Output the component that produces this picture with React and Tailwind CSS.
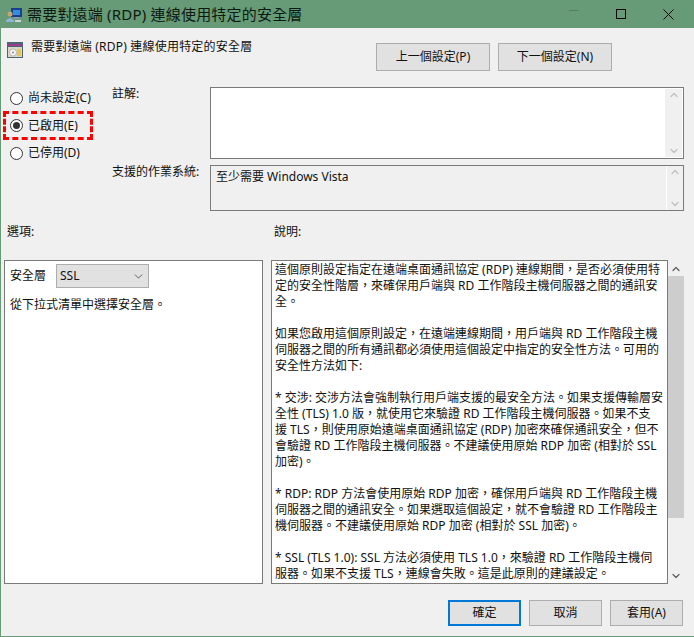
import { ChevronDown, ChevronUp } from "lucide-react";

const helpLines = [
  "這個原則設定指定在遠端桌面通訊協定 (RDP) 連線期間，是否必須使用特",
  "定的安全性階層，來確保用戶端與 RD 工作階段主機伺服器之間的通訊安",
  "全。",
  "",
  "如果您啟用這個原則設定，在遠端連線期間，用戶端與 RD 工作階段主機",
  "伺服器之間的所有通訊都必須使用這個設定中指定的安全性方法。可用的",
  "安全性方法如下:",
  "",
  "* 交涉: 交涉方法會強制執行用戶端支援的最安全方法。如果支援傳輸層安",
  "全性 (TLS) 1.0 版，就使用它來驗證 RD 工作階段主機伺服器。如果不支",
  "援 TLS，則使用原始遠端桌面通訊協定 (RDP) 加密來確保通訊安全，但不",
  "會驗證 RD 工作階段主機伺服器。不建議使用原始 RDP 加密 (相對於 SSL",
  "加密)。",
  "",
  "* RDP: RDP 方法會使用原始 RDP 加密，確保用戶端與 RD 工作階段主機",
  "伺服器之間的通訊安全。如果選取這個設定，就不會驗證 RD 工作階段主",
  "機伺服器。不建議使用原始 RDP 加密 (相對於 SSL 加密)。",
  "",
  "* SSL (TLS 1.0): SSL 方法必須使用 TLS 1.0，來驗證 RD 工作階段主機伺",
  "服器。如果不支援 TLS，連線會失敗。這是此原則的建議設定。",
];

function Radio({ label, checked }) {
  return (
    <div className="flex h-[22px] items-center pl-[9px]">
      <span className="flex h-[13px] w-[13px] items-center justify-center rounded-full border border-[#333333] bg-white">
        {checked && <span className="h-[7px] w-[7px] rounded-full bg-[#333333]" />}
      </span>
      <span className="ml-[5px]">{label}</span>
    </div>
  );
}

function Btn({ className, children }) {
  return (
    <div className={`flex items-center justify-center border border-[#adadad] bg-[#e1e1e1] ${className}`}>
      {children}
    </div>
  );
}

function BoxScroll({ className }) {
  return (
    <div className={`flex w-[17px] flex-col items-center justify-between ${className}`}>
      <ChevronUp size={12} strokeWidth={2.5} className="text-[#c0c0c0]" />
      <ChevronDown size={12} strokeWidth={2.5} className="text-[#c0c0c0]" />
    </div>
  );
}

export default function App() {
  return (
    <div className="flex h-[637px] w-[694px] flex-col overflow-hidden border-b border-l border-[#679a77] bg-[#f0f0f0] text-[12px] leading-[16px] text-[#111111] font-['Noto_Sans','Noto_Sans_CJK_TC',sans-serif]">
      {/* title bar */}
      <div className="flex h-[28px] shrink-0 items-center bg-[#679a77] text-[15px] text-[#0c1a10]">
        <svg width="17" height="17" viewBox="0 0 17 17" className="ml-[5px] shrink-0">
          <rect x="5" y="2" width="11" height="9" fill="#1c3f8f" />
          <rect x="7" y="4" width="7" height="5" fill="#2f8fe0" />
          <rect x="8" y="11" width="5" height="2" fill="#8a9aa8" />
          <circle cx="4" cy="8" r="2.5" fill="#c9a56a" />
          <path d="M0 16 C0 11 8 11 8 16 Z" fill="#8fb4dc" />
          <path d="M9 14h6v2H9z" fill="#d0d4d8" />
        </svg>
        <span className="ml-[4px] whitespace-pre tracking-[0.2px]">需要對遠端 (RDP) 連線使用特定的安全層</span>
        <div className="ml-auto mr-[2px] flex">
          <div className="flex w-[47px] justify-center">
            <span className="mt-px h-px w-[10px] bg-[#568064]" />
          </div>
          <div className="flex w-[47px] items-center justify-center">
            <span className="h-[10px] w-[10px] border border-black" />
          </div>
          <div className="flex w-[48px] items-center justify-center">
            <svg width="11" height="11" viewBox="0 0 11 11">
              <path d="M0.5 0.5L10.5 10.5M10.5 0.5L0.5 10.5" stroke="#000" strokeWidth="1" />
            </svg>
          </div>
        </div>
      </div>

      {/* header row */}
      <div className="flex h-[59px] shrink-0">
        <svg width="16" height="16" viewBox="0 0 16 16" className="ml-[6px] mt-[14px] shrink-0">
          <rect x="0" y="0" width="16" height="16" fill="#4a6578" />
          <rect x="1" y="2" width="14" height="2" fill="#9c3b8c" />
          <rect x="1" y="5" width="14" height="10" fill="#d9d6c8" />
          <circle cx="6" cy="10.5" r="3.5" fill="#f4f4f4" stroke="#8a8a8a" strokeWidth="0.5" />
          <circle cx="6" cy="10.5" r="1" fill="#8a8a8a" />
          <rect x="10" y="7" width="4" height="7" fill="#e6c65a" />
        </svg>
        <span className="ml-[8px] mt-[11px] whitespace-pre tracking-[0.2px]">需要對遠端 (RDP) 連線使用特定的安全層</span>
        <Btn className="ml-auto mt-[15px] h-[28px] w-[114px]">上一個設定(P)</Btn>
        <Btn className="ml-[8px] mr-[82px] mt-[15px] h-[28px] w-[114px]">下一個設定(N)</Btn>
      </div>

      {/* state + comment + supported on */}
      <div className="flex h-[124px] shrink-0">
        <div className="relative flex w-[112px] shrink-0 flex-col gap-[5.5px]">
          <Radio label="尚未設定(C)" />
          <Radio label="已啟用(E)" checked />
          <Radio label="已停用(D)" />
          <div className="absolute left-[2px] top-[24px] h-[29px] w-[90px] border-[3px] border-dashed border-[#ff0000]" />
        </div>
        <div className="flex flex-1 flex-col gap-[6px]">
          <div className="flex h-[72px]">
            <span className="-ml-px -mt-px w-[98px]">註解:</span>
            <div className="flex w-[474px] justify-end border border-[#7a7a7a] bg-white p-px">
              <BoxScroll className="bg-[#f0f0f0]" />
            </div>
          </div>
          <div className="flex h-[46px]">
            <span className="-ml-px -mt-px w-[98px]">支援的作業系統:</span>
            <div className="flex w-[474px] justify-between border border-[#7a7a7a] bg-[#f0f0f0]">
              <span className="pl-[5px] pt-[3px] whitespace-pre">至少需要 Windows Vista</span>
              <BoxScroll className="border-l border-white" />
            </div>
          </div>
        </div>
      </div>

      {/* section labels */}
      <div className="flex h-[49px] shrink-0 pt-[13px]">
        <span className="ml-[6px] w-[267px]">選項:</span>
        <span>說明:</span>
      </div>

      {/* panels */}
      <div className="flex h-[324px] shrink-0 pl-[3px]">
        <div className="w-[259px] border border-[#7a7a7a] bg-white pl-[5px] pt-[3px]">
          <div className="flex items-center">
            <span className="w-[46px]">安全層</span>
            <div className="flex h-[24px] w-[93px] items-center justify-between border border-[#adadad] bg-[#e1e1e1] pl-[3px] pr-[3px]">
              <span>SSL</span>
              <ChevronDown size={13} strokeWidth={1.5} className="text-[#444444]" />
            </div>
          </div>
          <p className="mt-[9px]">從下拉式清單中選擇安全層。</p>
        </div>
        <div className="ml-[8px] w-[397px] overflow-hidden border border-[#7a7a7a] bg-white pl-[3px] pt-px">
          {helpLines.map((line, i) => (
            <div key={i} className="h-[16px] whitespace-pre">
              {line}
            </div>
          ))}
        </div>
        <div className="flex w-[16px] flex-col items-center">
          <ChevronUp size={12} strokeWidth={2.5} className="mt-[2px] h-[14px] text-[#606060]" />
          <div className="h-[242px] w-full bg-[#cdcdcd]" />
          <ChevronDown size={12} strokeWidth={2.5} className="mt-auto mb-[2px] text-[#606060]" />
        </div>
      </div>

      {/* footer buttons */}
      <div className="flex flex-1 justify-end gap-[8px] pr-[11px] pt-[16px]">
        <div className="flex h-[26px] w-[73px] items-center justify-center border-2 border-[#0078d7] bg-[#e1e1e1]">確定</div>
        <Btn className="h-[26px] w-[73px]">取消</Btn>
        <Btn className="h-[26px] w-[73px]">套用(A)</Btn>
      </div>
    </div>
  );
}
